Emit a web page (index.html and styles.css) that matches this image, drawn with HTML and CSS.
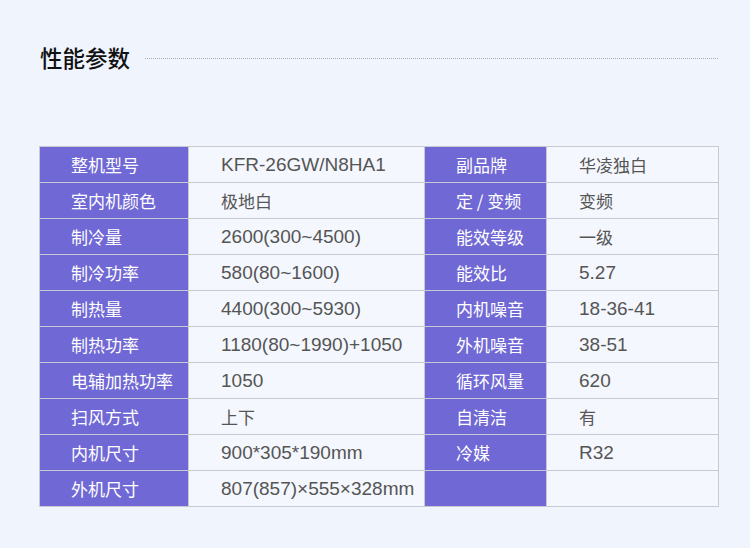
FILE: index.html
```html
<!DOCTYPE html>
<html lang="zh">
<head>
<meta charset="utf-8">
<link rel="stylesheet" href="styles.css">
</head>
<body>
<div class="page">
  <div class="head">
    <h2 class="title">性能参数</h2>
    <div class="rule"></div>
  </div>
  <table class="spec">
    <colgroup><col class="c1"><col class="c2"><col class="c3"><col class="c4"></colgroup>
    <tr><th>整机型号</th><td>KFR-26GW/N8HA1</td><th>副品牌</th><td class="cn">华凌独白</td></tr>
    <tr><th>室内机颜色</th><td class="cn">极地白</td><th>定 / 变频</th><td class="cn">变频</td></tr>
    <tr><th>制冷量</th><td>2600(300~4500)</td><th>能效等级</th><td class="cn">一级</td></tr>
    <tr><th>制冷功率</th><td>580(80~1600)</td><th>能效比</th><td>5.27</td></tr>
    <tr><th>制热量</th><td>4400(300~5930)</td><th>内机噪音</th><td>18-36-41</td></tr>
    <tr><th>制热功率</th><td>1180(80~1990)+1050</td><th>外机噪音</th><td>38-51</td></tr>
    <tr><th>电辅加热功率</th><td>1050</td><th>循环风量</th><td>620</td></tr>
    <tr><th>扫风方式</th><td class="cn">上下</td><th>自清洁</th><td class="cn">有</td></tr>
    <tr><th>内机尺寸</th><td>900*305*190mm</td><th>冷媒</th><td>R32</td></tr>
    <tr><th>外机尺寸</th><td>807(857)×555×328mm</td><th></th><td></td></tr>
  </table>
</div>
</body>
</html>
```
FILE: styles.css
```css
html, body {
  margin: 0;
  padding: 0;
  background: #eff4fd;
}
.page {
  width: 750px;
  height: 548px;
  box-sizing: border-box;
  padding: 42px 32px 0 39px;
  font-family: "Liberation Sans", "Noto Sans CJK SC", sans-serif;
}
.head {
  display: flex;
  align-items: center;
  gap: 15px;
  height: 30px;
}
.title {
  margin: 0 0 0 1px;
  font-size: 22.5px;
  font-weight: 500;
  color: #111;
  line-height: 30px;
  font-family: "Noto Sans CJK SC", sans-serif;
}
.rule {
  flex: 1;
  border-top: 1px dotted #a8acb4;
  margin-top: 3px;
}
.spec {
  margin-top: 74px;
  border-collapse: collapse;
  table-layout: fixed;
  width: 679px;
}
.c1 { width: 149px; }
.c2 { width: 236px; }
.c3 { width: 122px; }
.c4 { width: 172px; }
.spec th, .spec td {
  border: 1px solid #c8c9d2;
  height: 36px;
  padding: 0 0 0 31px;
  text-align: left;
  font-size: 17px;
  line-height: 20px;
  font-weight: 400;
  white-space: nowrap;
  box-sizing: border-box;
}
.spec th {
  background: #7068d4;
  color: #fff;
  font-family: "Noto Sans CJK SC", sans-serif;
}
.spec td {
  background: #f4f7fd;
  color: #555;
  padding-left: 32px;
  font-size: 19px;
}
.spec td.cn {
  font-size: 17px;
  font-family: "Noto Sans CJK SC", sans-serif;
}
```
